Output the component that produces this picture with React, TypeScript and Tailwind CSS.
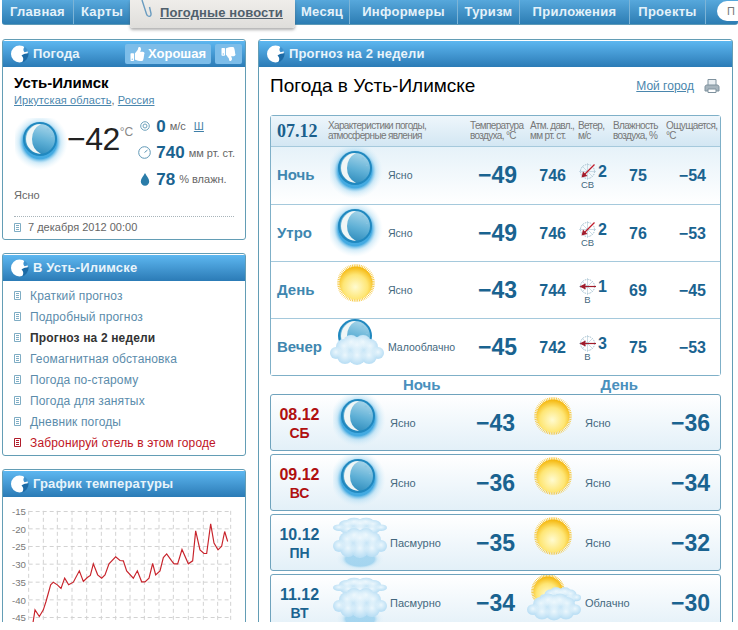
import clsx from 'clsx';
import { memo } from 'react';
import { FaThumbsDown, FaThumbsUp } from 'react-icons/fa';

const FONT = "font-['Liberation_Sans',Arial,sans-serif]";

const Defs = () => (
  <svg className="absolute h-0 w-0" aria-hidden="true">
    <defs>
      <radialGradient id="glow">
        <stop offset="0.6" stopColor="#3aa6e0" stopOpacity="0.95" />
        <stop offset="0.75" stopColor="#9ad3f0" stopOpacity="0.45" />
        <stop offset="1" stopColor="#d5edf9" stopOpacity="0" />
      </radialGradient>
      <linearGradient id="moonDisc" x1="0.7" y1="0" x2="0.4" y2="1">
        <stop offset="0" stopColor="#a8d6ea" />
        <stop offset="0.55" stopColor="#5fb0d6" />
        <stop offset="1" stopColor="#2f8cbc" />
      </linearGradient>
      <radialGradient id="sunDisc" cx="0.48" cy="0.62" r="0.62">
        <stop offset="0" stopColor="#fffbd0" />
        <stop offset="0.6" stopColor="#fee675" />
        <stop offset="1" stopColor="#f4b50a" />
      </radialGradient>
      <radialGradient id="puff">
        <stop offset="0" stopColor="#f4fbfe" stopOpacity="0.85" />
        <stop offset="1" stopColor="#f4fbfe" stopOpacity="0" />
      </radialGradient>
    </defs>
  </svg>
);

const MoonShape = ({ cx, cy, r }: { cx: number; cy: number; r: number }) => (
  <g>
    <circle cx={cx} cy={cy} r={r} fill="#2088bf" />
    <circle cx={cx} cy={cy} r={r - 2} fill="url(#moonDisc)" />
    <path
      d={`M${cx + 1} ${cy - r + 2}A${r - 2} ${r - 2} 0 1 0 ${cx + 1} ${cy + r - 2}A${r} ${r} 0 0 1 ${cx + 1} ${cy - r + 2}Z`}
      fill="#eff6f6"
    />
    <circle cx={cx + r * 0.45} cy={cy - r * 0.55} r="1.2" fill="#8cc6e2" />
    <circle cx={cx + r * 0.7} cy={cy - r * 0.15} r="0.8" fill="#8cc6e2" />
  </g>
);

const PUFFS: [number, number, number][] = [
  [6, 34, 6],
  [48, 34, 6],
  [14, 28, 8],
  [40, 28, 8],
  [21, 24, 8],
  [33, 24, 8],
  [27, 27, 9],
  [15, 37, 8],
  [39, 37, 8],
  [27, 37, 9],
];

const CloudShape = ({ x = 0, y = 0, sx = 1, sy = 1 }: { x?: number; y?: number; sx?: number; sy?: number }) => (
  <g transform={`translate(${x} ${y}) scale(${sx} ${sy})`}>
    {PUFFS.map(([cx, cy, r]) => (
      <circle key={`${cx}-${cy}`} cx={cx} cy={cy} r={r} fill="#bde0f5" />
    ))}
    {PUFFS.map(([cx, cy, r]) => (
      <circle key={`${cx}-${cy}`} cx={cx} cy={cy - 1} r={r} fill="url(#puff)" />
    ))}
  </g>
);

const SunShape = ({ cx, cy, r }: { cx: number; cy: number; r: number }) => (
  <g>
    {Array.from({ length: 64 }, (_, i) => {
      const a = (i / 64) * Math.PI * 2;
      return (
        <line
          key={i}
          x1={cx + Math.cos(a) * (r - 2)}
          y1={cy + Math.sin(a) * (r - 2)}
          x2={cx + Math.cos(a) * (r + 0.8)}
          y2={cy + Math.sin(a) * (r + 0.8)}
          stroke="#f5bf1f"
          strokeWidth="0.8"
        />
      );
    })}
    <circle cx={cx} cy={cy} r={r - 1.5} fill="url(#sunDisc)" />
  </g>
);

type IconKind = 'moon' | 'sun' | 'overcast' | 'moonCloud' | 'sunCloud';

const WeatherIcon = memo<{ kind: IconKind; className?: string }>(({ kind, className }) => (
  <svg viewBox="0 0 54 57" className={clsx('block h-[57px] w-[54px]', className)}>
    {kind === 'moon' && (
      <>
        <circle cx="25" cy="24" r="28" fill="url(#glow)" />
        <MoonShape cx={25} cy={21} r={17} />
      </>
    )}
    {kind === 'sun' && <SunShape cx={26} cy={21} r={18} />}
    {kind === 'overcast' && (
      <>
        <ellipse cx="27" cy="44" rx="24" ry="12" fill="url(#glow)" opacity="0.4" />
        <CloudShape y={-6} sy={0.55} />
        <CloudShape y={-3} />
      </>
    )}
    {kind === 'moonCloud' && (
      <>
        <MoonShape cx={25} cy={17} r={17} />
        <CloudShape />
      </>
    )}
    {kind === 'sunCloud' && (
      <>
        <SunShape cx={21} cy={16} r={16} />
        <CloudShape x={13} y={3} sx={0.76} sy={0.58} />
        <CloudShape y={4} sy={0.9} />
      </>
    )}
  </svg>
));
WeatherIcon.displayName = 'WeatherIcon';

const Logo = () => (
  <svg viewBox="0 0 18 18" className="h-[18px] w-[18px] shrink-0">
    <circle cx="8.5" cy="9" r="8.5" fill="#fff" />
    <path d="M10.5 10.5C12.5 8.8 15 8.6 17.5 8C17.8 12.5 15 16.5 11 17.5C13 15 12.5 12 10.5 10.5Z" fill="#1d6ba6" />
    <path d="M13.5 1.8C12 3.8 12 6 13.5 7.2C15 6.8 16 6.6 17 6.2C16.5 4.4 15.2 2.8 13.5 1.8Z" fill="#3f93cf" />
  </svg>
);

const DocIcon = memo<{ red?: boolean }>(({ red }) => (
  <svg viewBox="0 0 7 9" className="h-[9px] w-[7px] shrink-0">
    <path
      d="M.5.5h6v8h-6zM2 2.5h3M2 4.5h3M2 6.5h3"
      fill="none"
      stroke={red ? '#b01c2a' : '#7fadc4'}
      strokeWidth="1"
    />
  </svg>
));
DocIcon.displayName = 'DocIcon';

const PanelHead = memo<{ title: string; children?: React.ReactNode }>(({ title, children }) => (
  <div className="flex h-[26px] items-center bg-gradient-to-b from-[#5db7f0] to-[#2b7bb6] pl-[8px] pr-[3px]">
    <Logo />
    <span className="ml-[4px] text-[13px] font-bold tracking-[0.15px] text-[#e8f4fb]">{title}</span>
    {children}
  </div>
));
PanelHead.displayName = 'PanelHead';

const Panel = memo<{ title: string; className?: string; head?: React.ReactNode; children: React.ReactNode }>(
  ({ title, className, head, children }) => (
    <section className={clsx('rounded-[3px] border border-[#639db5] bg-white pt-[1px]', className)}>
      <PanelHead title={title}>{head}</PanelHead>
      {children}
    </section>
  ),
);
Panel.displayName = 'Panel';

const NavItem = ({ label, className }: { label: string; className: string }) => (
  <span className={clsx('flex items-center justify-center border-r border-[#7db4d6] text-[13px] font-bold tracking-[0.3px] text-[#e4f2fa]', className)}>
    {label}
  </span>
);

const Nav = () => (
  <nav className="ml-[2px] flex h-[25px] rounded-b-[3px] border-b border-[#5d9ab8] bg-gradient-to-b from-[#57a8dc] to-[#2c7db3]">
    <NavItem label="Главная" className="w-[72px]" />
    <NavItem label="Карты" className="w-[56px] border-r-0" />
    <div className="z-10 flex h-[28px] w-[165px] rounded-b-[3px] bg-gradient-to-b from-[#efedea] to-[#dfdedb] pl-[11px] shadow-[0_2px_3px_rgba(80,80,80,.45)]">
      <svg viewBox="0 0 12 20" className="h-[20px] w-[12px] shrink-0">
        <path d="M1 0l4.5 14c1 3.5 5 3 4.5-.5L8.5 7" fill="none" stroke="#6a9cc0" strokeWidth="1.4" />
      </svg>
      <span className="ml-[7px] flex h-[25px] items-center text-[13px] font-bold tracking-[0.1px] text-[#50606c] underline">Погодные новости</span>
    </div>
    <NavItem label="Месяц" className="w-[55px]" />
    <NavItem label="Информеры" className="w-[108px]" />
    <NavItem label="Туризм" className="w-[62px]" />
    <NavItem label="Приложения" className="w-[110px]" />
    <NavItem label="Проекты" className="w-[76px]" />
    <div className="ml-[11px] mt-[1px] flex h-[20px] flex-1 items-center rounded-l-full bg-white pl-[10px] text-[11px] text-[#777]">П</div>
  </nav>
);

const Stat = memo<{ icon: React.ReactNode; value: string; unit: string; extra?: string }>(({ icon, value, unit, extra }) => (
  <div className="flex h-[26.5px] items-center whitespace-nowrap">
    <span className="flex w-[17px] justify-center">{icon}</span>
    <span className="ml-[3px] text-[17px] font-bold text-[#1a6390]">{value}</span>
    <span className="ml-[4px] text-[11px] text-[#666]">{unit}</span>
    {extra && <span className="ml-[8px] text-[11px] text-[#3f7fa8] underline">{extra}</span>}
  </div>
));
Stat.displayName = 'Stat';

const NowPanel = () => (
  <Panel
    title="Погода"
    className="h-[201px]"
    head={
      <div className="ml-auto flex gap-[4px]">
        <div className="flex h-[20px] w-[86px] items-center justify-center gap-[3px] rounded-[2px] bg-[#7dbde9] text-[13px] font-bold text-white">
          <FaThumbsUp className="h-[14px] w-[15px]" />
          Хорошая
        </div>
        <div className="flex h-[20px] w-[27px] items-center justify-center rounded-[2px] bg-[#7dbde9] text-white">
          <FaThumbsDown className="h-[14px] w-[15px]" />
        </div>
      </div>
    }
  >
    <div className="px-[11px] pt-[7px]">
      <h2 className="text-[15px] font-bold leading-[18px] text-black">Усть-Илимск</h2>
      <p className="mt-[2px] text-[11px] leading-[13px] tracking-[0.1px] text-[#666]">
        <span className="text-[#4a86ad] underline">Иркутская область</span>, <span className="text-[#4a86ad] underline">Россия</span>
      </p>
      <div className="mt-[11px] flex">
        <WeatherIcon kind="moon" className="ml-[1px] shrink-0" />
        <div className="ml-[-2px] mt-[5px] flex h-[30px] shrink-0 items-start">
          <span className="text-[32px] font-normal leading-[32px] tracking-[-0.5px] text-[#222]">−42</span>
          <span className="mt-[3px] text-[12px] leading-[12px] text-[#888]">°C</span>
        </div>
        <div className="ml-[3px] mt-[-5px]">
          <Stat
            value="0"
            unit="м/с"
            extra="Ш"
            icon={
              <svg viewBox="0 0 10 10" className="h-[10px] w-[10px]">
                <circle cx="5" cy="5" r="4.3" fill="none" stroke="#6fa3bd" />
                <circle cx="5" cy="5" r="2" fill="none" stroke="#6fa3bd" />
              </svg>
            }
          />
          <Stat
            value="740"
            unit="мм рт. ст."
            icon={
              <svg viewBox="0 0 13 13" className="h-[13px] w-[13px]">
                <circle cx="6.5" cy="6.5" r="5.8" fill="none" stroke="#5f97b6" />
                <path d="M6.5 6.5L9.5 4" stroke="#5f97b6" />
              </svg>
            }
          />
          <Stat
            value="78"
            unit="% влажн."
            icon={
              <svg viewBox="0 0 10 13" className="h-[13px] w-[10px]">
                <path d="M5 0C3.5 3 .8 5.5.8 8.5a4.2 4.2 0 0 0 8.4 0C9.2 5.5 6.5 3 5 0Z" fill="#2a7ca9" />
              </svg>
            }
          />
        </div>
      </div>
      <p className="mt-[-4px] text-[11px] leading-[13px] text-[#666]">Ясно</p>
      <div className="mt-[14px] flex items-center gap-[7px] border-t border-dotted border-[#a8b4ba] pt-[4px] text-[11px] leading-[13px] text-[#666]">
        <DocIcon />
        7 декабря 2012 00:00
      </div>
    </div>
  </Panel>
);

const LINKS = [
  'Краткий прогноз',
  'Подробный прогноз',
  'Прогноз на 2 недели',
  'Геомагнитная обстановка',
  'Погода по-старому',
  'Погода для занятых',
  'Дневник погоды',
  'Забронируй отель в этом городе',
];

const LinksPanel = () => (
  <Panel title="В Усть-Илимске" className="mt-[13px] h-[203px]">
    <ul className="pl-[11px] pt-[4px]">
      {LINKS.map((link, index) => (
        <li key={link} className="flex h-[21px] items-center gap-[9px] text-[12px] tracking-[0.15px]">
          <DocIcon red={index === 7} />
          <span
            className={clsx({
              'font-bold text-[#333]': index === 2,
              'text-[#c01424]': index === 7,
              'text-[#5b8cab]': index !== 2 && index !== 7,
            })}
          >
            {link}
          </span>
        </li>
      ))}
    </ul>
  </Panel>
);

const CHART_POINTS =
  '98,520 105,475 118,495 130,475 138,450 152,400 160,392 172,400 183,411 194,380 206,400 220,392 238,358 250,390 262,378 271,372 280,337 293,370 305,380 315,370 327,337 347,316 360,327 370,328 380,358 400,380 412,358 425,391 435,391 447,380 458,336 467,370 480,358 490,318 500,307 515,328 522,337 533,337 546,294 565,337 578,328 587,238 600,295 612,306 620,306 632,217 642,275 654,295 665,284 674,240 683,270';
const GRID_X = [86, 130, 172, 216, 260, 304, 347, 390, 433, 477, 520, 565, 610, 653, 692];
const GRID_Y = [
  { y: 180, label: '-15' },
  { y: 232, label: '-20' },
  { y: 285, label: '-25' },
  { y: 338, label: '-30' },
  { y: 392, label: '-35' },
  { y: 445, label: '-40' },
  { y: 498, label: '-45' },
];

const ChartPanel = () => (
  <Panel title="График температуры" className="mt-[13px] h-[175px]">
    <svg viewBox="9 137 720 380" className="block h-[127px] w-[240px]">
      {GRID_X.map((x) => (
        <line key={x} x1={x} y1="178" x2={x} y2="517" stroke="#d2d2d2" strokeWidth="3" strokeDasharray="12 9" />
      ))}
      {GRID_Y.map(({ y, label }) => (
        <g key={y}>
          <line x1="86" y1={y} x2="692" y2={y} stroke="#d2d2d2" strokeWidth="3" strokeDasharray="12 9" />
          <text x="78" y={y + 11} textAnchor="end" fontSize="29" fill="#777" fontFamily="Liberation Sans">
            {label}
          </text>
        </g>
      ))}
      <polyline points={CHART_POINTS} fill="none" stroke="#c8242c" strokeWidth="3.5" />
    </svg>
  </Panel>
);

const Compass = memo<{ dir: 'ne' | 'e' }>(({ dir }) => (
  <svg viewBox="0 0 17 17" className="h-[17px] w-[17px]">
    <circle cx="8.5" cy="8.5" r="7" fill="none" stroke="#9dbccc" strokeDasharray="1.5 1" />
    <path d="M8.5 0v17M0 8.5h17M3 3l11 11M14 3L3 14" stroke="#b7cedb" strokeWidth="0.7" />
    {dir === 'ne' ? (
      <>
        <path d="M15.5 1.5L6 11" stroke="#c01c2a" strokeWidth="1.2" />
        <path d="M2.5 14.5l1.5-6 4.5 4.5Z" fill="#a01c2c" />
      </>
    ) : (
      <>
        <path d="M17 8.5H6" stroke="#a01c2a" strokeWidth="1.2" />
        <path d="M0.5 8.5l6-3v6Z" fill="#a01c2c" />
      </>
    )}
  </svg>
));
Compass.displayName = 'Compass';

const DAY_ROWS: {
  name: string;
  icon: IconKind;
  desc: string;
  temp: string;
  pressure: number;
  wind: number;
  dirLabel: string;
  dir: 'ne' | 'e';
  humidity: number;
  feels: string;
}[] = [
  { name: 'Ночь', icon: 'moon', desc: 'Ясно', temp: '−49', pressure: 746, wind: 2, dirLabel: 'СВ', dir: 'ne', humidity: 75, feels: '−54' },
  { name: 'Утро', icon: 'moon', desc: 'Ясно', temp: '−49', pressure: 746, wind: 2, dirLabel: 'СВ', dir: 'ne', humidity: 76, feels: '−53' },
  { name: 'День', icon: 'sun', desc: 'Ясно', temp: '−43', pressure: 744, wind: 1, dirLabel: 'В', dir: 'e', humidity: 69, feels: '−45' },
  { name: 'Вечер', icon: 'moonCloud', desc: 'Малооблачно', temp: '−45', pressure: 742, wind: 3, dirLabel: 'В', dir: 'e', humidity: 75, feels: '−53' },
];

const ROW_GRID = 'grid grid-cols-[59px_54px_70px_63px_55px_48px_36px_50px] items-center';

const TodayTable = () => (
  <div className="mt-[18px] rounded-[3px] border border-[#7fb0c8]">
    <div className="flex h-[31px] items-center border-b border-[#a5c9dc] bg-gradient-to-b from-[#eef6fb] to-[#d3e7f3] text-[10px] leading-[10px] tracking-[-0.65px] text-[#777]">
      <span className="w-[57px] pl-[6px] font-['Liberation_Serif',serif] text-[18px] font-bold tracking-normal text-[#1a5f8c]">07.12</span>
      <span className="w-[142px]">Характеристики погоды,<br />атмосферные явления</span>
      <span className="w-[60px]">Температура<br />воздуха, °C</span>
      <span className="w-[48px]">Атм. давл.,<br />мм рт. ст.</span>
      <span className="w-[35px]">Ветер,<br />м/с</span>
      <span className="w-[53px]">Влажность<br />воздуха, %</span>
      <span>Ощущается,<br />°C</span>
    </div>
    {DAY_ROWS.map((row, index) => (
      <div
        key={row.name}
        className={clsx(ROW_GRID, 'h-[57px] bg-gradient-to-b to-white', {
          'border-t border-[#a5c9dc] from-white': index > 0,
          'from-[#e6f2f9]': index === 0,
        })}
      >
        <span className="pl-[6px] text-[15px] font-bold text-[#3f87b0]">{row.name}</span>
        <WeatherIcon kind={row.icon} />
        <span className="pl-[4px] text-[10.5px] text-[#44687e]">{row.desc}</span>
        <span className="text-right text-[23px] font-bold text-[#1a6390]">{row.temp}</span>
        <span className="pr-[6px] text-right text-[16px] font-bold text-[#1a6390]">{row.pressure}</span>
        <span className="flex items-start pl-[7px]">
          <span className="flex w-[17px] flex-col items-center">
            <Compass dir={row.dir} />
            <span className="text-[9.5px] leading-[9px] text-[#44687e]">{row.dirLabel}</span>
          </span>
          <span className="ml-[2px] text-[16px] font-bold leading-[18px] text-[#1a6390]">{row.wind}</span>
        </span>
        <span className="text-center text-[16px] font-bold text-[#1a6390]">{row.humidity}</span>
        <span className="text-right text-[16px] font-bold text-[#1a6390]">{row.feels}</span>
      </div>
    ))}
  </div>
);

const DAYS: {
  date: string;
  weekday: string;
  weekend?: boolean;
  night: [IconKind, string, string];
  day: [IconKind, string, string];
}[] = [
  { date: '08.12', weekday: 'СБ', weekend: true, night: ['moon', 'Ясно', '−43'], day: ['sun', 'Ясно', '−36'] },
  { date: '09.12', weekday: 'ВС', weekend: true, night: ['moon', 'Ясно', '−36'], day: ['sun', 'Ясно', '−34'] },
  { date: '10.12', weekday: 'ПН', night: ['overcast', 'Пасмурно', '−35'], day: ['sun', 'Ясно', '−32'] },
  { date: '11.12', weekday: 'ВТ', night: ['overcast', 'Пасмурно', '−34'], day: ['sunCloud', 'Облачно', '−30'] },
];

const DayCard = memo<(typeof DAYS)[number]>(({ date, weekday, weekend, night, day }) => (
  <div className="grid h-[57px] shrink-0 grid-cols-[57px_60px_67px_60px_70px_65px_60px] items-center rounded-[3px] border border-[#6fa3bd] bg-gradient-to-b from-white to-[#e3f0f8]">
    <div className={clsx('text-center font-bold', weekend ? 'text-[#b01010]' : 'text-[#1a6390]')}>
      <div className="text-[16px] leading-[18px]">{date}</div>
      <div className="text-[14px] leading-[18px]">{weekday}</div>
    </div>
    <WeatherIcon kind={night[0]} className="ml-[5px]" />
    <span className="pl-[2px] text-[11px] text-[#44687e]">{night[1]}</span>
    <span className="text-right text-[23px] font-bold text-[#1a6390]">{night[2]}</span>
    <WeatherIcon kind={day[0]} className="ml-[12px]" />
    <span className="text-[11px] text-[#44687e]">{day[1]}</span>
    <span className="text-right text-[23px] font-bold text-[#1a6390]">{day[2]}</span>
  </div>
));
DayCard.displayName = 'DayCard';

const ForecastPanel = () => (
  <Panel title="Прогноз на 2 недели" className="h-[600px] flex-1">
    <div className="px-[11px] pt-[8px]">
      <div className="flex items-center">
        <h1 className="text-[19px] leading-[22px] text-black">Погода в Усть-Илимске</h1>
        <span className="ml-auto text-[12px] text-[#4a86ad] underline">Мой город</span>
        <svg viewBox="0 0 16 16" className="ml-[10px] mr-[1px] h-[16px] w-[16px]">
          <path d="M4 7V1.5h8V7" fill="#e8eef2" stroke="#7f929e" />
          <path d="M1 13V9c0-1.5 1-2 2-2h10c1 0 2 .5 2 2v4Z" fill="#a6b4bd" stroke="#7f929e" />
          <path d="M4 11h8v3.5H4Z" fill="#fff" stroke="#7f929e" />
        </svg>
      </div>
      <TodayTable />
      <div className="flex h-[18px] items-center text-[15px] font-bold text-[#4a90bd]">
        <span className="ml-[133px]">Ночь</span>
        <span className="ml-[160px]">День</span>
      </div>
      <div className="flex flex-col gap-[3px]">
        {DAYS.map((d) => (
          <DayCard key={d.date} {...d} />
        ))}
      </div>
    </div>
  </Panel>
);

export default function App() {
  return (
    <div className={clsx('h-[622px] overflow-hidden bg-white', FONT)}>
      <Defs />
      <Nav />
      <main className="mt-[14px] flex gap-[12px] pl-[2px] pr-[5px]">
        <aside className="w-[244px] shrink-0">
          <NowPanel />
          <LinksPanel />
          <ChartPanel />
        </aside>
        <ForecastPanel />
      </main>
    </div>
  );
}
